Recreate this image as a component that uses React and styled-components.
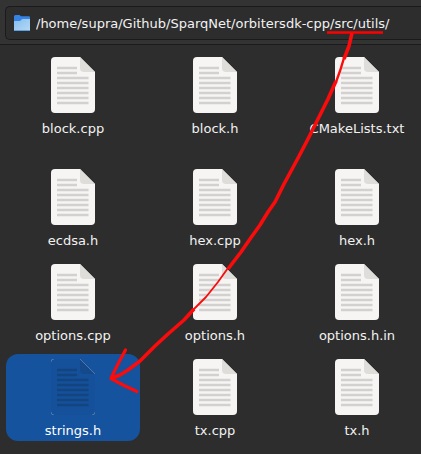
import React from "react";
import styled, { createGlobalStyle, css } from "styled-components";

const GlobalStyle = createGlobalStyle`
  * { box-sizing: border-box; }
  body {
    margin: 0;
    background: #2d2d2d;
    color: #f2f2f2;
    font-family: "DejaVu Sans", sans-serif;
    font-size: 13px;
    line-height: 16px;
  }
`;

const Window = styled.main`
  position: relative;
  min-height: 100vh;
  overflow: hidden;
  background: #2d2d2d;
`;

const Toolbar = styled.header`
  display: flex;
  height: 45px;
  padding: 6px 0 4px 5px;
  background: #333333;
  border-bottom: 1px solid #1b1b1b;
`;

const PathBar = styled.label`
  display: flex;
  flex: 1;
  align-items: center;
  gap: 6px;
  padding-left: 8px;
  background: #2d2d2d;
  border: 1px solid #1b1b1b;
  border-right: 0;
  border-radius: 5px 0 0 5px;
`;

const PathInput = styled.input`
  flex: 1;
  min-width: 0;
  padding: 2px 0 0;
  border: 0;
  outline: 0;
  background: transparent;
  color: inherit;
  font: inherit;
`;

const FileGrid = styled.section`
  display: grid;
  grid-template-columns: repeat(3, 1fr);
  grid-template-rows: 104px;
  grid-auto-rows: 87px;
  gap: 8px;
  padding: 7px 0 13px 6px;
  margin-right: -3px;
`;

const FileButton = styled.button`
  display: flex;
  flex-direction: column;
  align-items: center;
  justify-content: flex-start;
  gap: 8px;
  min-width: 0;
  padding: 5px 0 0;
  border: 0;
  border-radius: 12px;
  background: transparent;
  color: inherit;
  font: inherit;
  ${(p) => p.$selected && css`
    background: #15539e;
    color: #ffffff;
  `}
`;

const Annotation = styled.svg`
  position: absolute;
  top: 0;
  left: 0;
  pointer-events: none;
`;

const FolderIcon = () => (
  <svg width="16" height="16" viewBox="0 0 16 16" aria-hidden="true">
    <defs>
      <linearGradient id="folder" x1="0" y1="0" x2="1" y2="1">
        <stop offset="0" stopColor="#86bdf0" />
        <stop offset="1" stopColor="#b5daf3" />
      </linearGradient>
    </defs>
    <path d="M0 1.5Q0 0 1.5 0H5.5L7 1.3H15Q16 1.3 16 2.5V15H0Z" fill="#3584e4" />
    <path d="M0 6H5.5Q6.5 6 7.3 4.7Q7.8 4 9 4H16V15.2Q16 16 15 16H1Q0 16 0 15.2Z" fill="url(#folder)" />
    <path d="M0 15H16L15.5 16H.5Z" fill="#5ba1e8" />
  </svg>
);

const DocumentIcon = ({ selected }) => {
  const paper = selected ? "#15519a" : "#f6f5f4";
  const fold = selected ? "#144a8c" : "#deddda";
  const line = selected ? "#13447f" : "#d2d1cf";
  return (
    <svg width="44" height="56" viewBox="0 0 44 56" aria-hidden="true">
      <path d="M4 0H29L44 15V52Q44 56 40 56H4Q0 56 0 52V4Q0 0 4 0Z" fill={paper} />
      <path d="M29 0L44 15H33Q29 15 29 11Z" fill={fold} />
      {selected && (
        <path
          d="M0 3Q0 0 3 0M29 0L44 15M0 53Q0 56 3 56M44 53Q44 56 41 56"
          fill="none"
          stroke="#6483aa"
          strokeWidth=".8"
        />
      )}
      <path
        d="M6 11H26M6 16H26M6 21H37.5M6 26H37.5M6 31H37.5M6 36H37.5M6 41H37.5M6 46H37.5"
        stroke={line}
        strokeWidth="2.3"
      />
    </svg>
  );
};

const files = [
  "block.cpp", "block.h", "CMakeLists.txt",
  "ecdsa.h", "hex.cpp", "hex.h",
  "options.cpp", "options.h", "options.h.in",
  "strings.h", "tx.cpp", "tx.h",
];

const selectedFile = "strings.h";

export default function App() {
  return (
    <>
      <GlobalStyle />
      <Window>
        <Toolbar>
          <PathBar>
            <FolderIcon />
            <PathInput
              aria-label="Location"
              defaultValue="/home/supra/Github/SparqNet/orbitersdk-cpp/src/utils/"
            />
          </PathBar>
        </Toolbar>
        <FileGrid aria-label="Files">
          {files.map((name) => (
            <FileButton key={name} type="button" $selected={name === selectedFile} aria-pressed={name === selectedFile}>
              <DocumentIcon selected={name === selectedFile} />
              <span>{name}</span>
            </FileButton>
          ))}
        </FileGrid>
        <Annotation
          width="421"
          height="454"
          viewBox="0 0 421 454"
          fill="none"
          stroke="#fb0b0b"
          strokeWidth="3.6"
          strokeLinejoin="round"
          aria-hidden="true"
        >
          <path d="M327 32.5H383" stroke="#ff0000" strokeWidth="2.6" />
          <path d="M352 33L349 46L344 59" />
          <path d="M344 58L340 71L336 82" strokeWidth="2.4" />
          <path d="M336 81L328 99L318 119L308 139L297 160L284 184L275 202L268 212L260 225L250 239L241 252L228 269" />
          <path d="M228 268L218 282L206 297L193 310" strokeWidth="1.8" />
          <path d="M194 309L184 320L168 334L155 346L140 361L128 370L120 375L111 378.5" />
          <path d="M125.5 350L119 362L114 372L111 378.5L124 385.5L137 391.5" strokeWidth="3.2" strokeLinecap="round" />
        </Annotation>
      </Window>
    </>
  );
}
